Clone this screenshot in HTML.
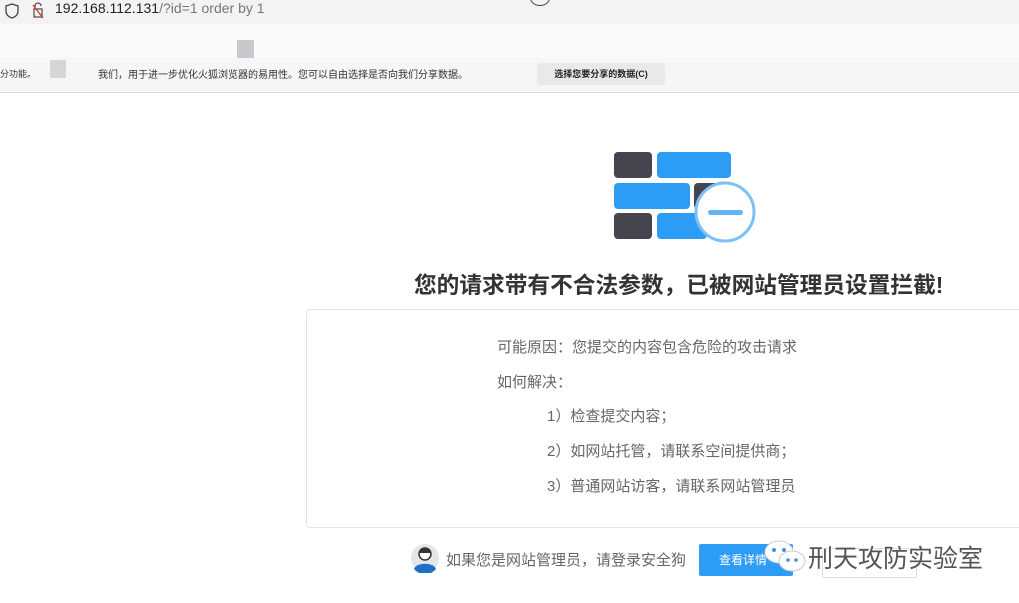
<!DOCTYPE html>
<html><head><meta charset="utf-8"><style>
body{margin:0;width:1019px;height:603px;background:#fff;position:relative;overflow:hidden;font-family:"Liberation Sans","Noto Sans CJK SC",sans-serif}
.a{position:absolute;white-space:nowrap}
.t{font-size:15px;color:#666}
</style></head><body>
<div class="a" style="left:0;top:0;width:1019px;height:24px;background:#f3f3f5"></div>
<div class="a" style="left:0;top:24px;width:1019px;height:34px;background:#fafafa"></div>
<div class="a" style="left:0;top:58px;width:1019px;height:34px;background:#f6f6f7;border-bottom:1px solid #ddd"></div>
<svg class="a" style="left:5px;top:2px" width="40" height="18"><path d="M7 2 L13 4 V9 C13 13 10 15 7 16 C4 15 1 13 1 9 V4Z" fill="none" stroke="#444" stroke-width="1.3"/><rect x="29" y="7" width="8" height="8" fill="none" stroke="#555" stroke-width="1.3"/><path d="M30 7 V4 a3 3 0 0 1 6 0" fill="none" stroke="#555" stroke-width="1.3"/><path d="M28 3 L38 16" stroke="#d33" stroke-width="1.4"/></svg>
<div class="a" style="left:55px;top:0px;font-size:14px;color:#222">192.168.112.131<span style="color:#777">/?id=1 order by 1</span></div>
<div class="a" style="left:530px;top:-10px;width:18px;height:14px;border:1.5px solid #444;border-radius:50%"></div>
<div class="a" style="left:237px;top:40px;width:17px;height:18px;background:#c8c8cc"></div>
<div class="a" style="left:50px;top:60px;width:16px;height:18px;background:#d6d6d8"></div>
<div class="a" style="left:0;top:67px;font-size:9px;color:#333">分功能。</div>
<div class="a" style="left:98px;top:66px;font-size:10px;color:#333">我们，用于进一步优化火狐浏览器的易用性。您可以自由选择是否向我们分享数据。</div>
<div class="a" style="left:537px;top:63px;width:128px;height:22px;background:#e9e9ec;border-radius:3px;font-size:9px;color:#222;line-height:22px;text-align:center;font-weight:bold">选择您要分享的数据(C)</div>
<svg class="a" style="left:600px;top:140px" width="170" height="110">
<rect x="14" y="12" width="38" height="26" rx="4" fill="#454550"/>
<rect x="57" y="12" width="74" height="26" rx="4" fill="#2d9cf4"/>
<rect x="14" y="43" width="76" height="26" rx="4" fill="#2d9cf4"/>
<rect x="94" y="43" width="38" height="26" rx="4" fill="#454550"/>
<rect x="14" y="73" width="38" height="26" rx="4" fill="#454550"/>
<rect x="57" y="73" width="50" height="26" rx="4" fill="#2d9cf4"/>
<circle cx="125" cy="72" r="29" fill="#fff" stroke="#7cc0f6" stroke-width="3"/>
<rect x="108" y="70" width="35" height="5" rx="2.5" fill="#63b3f5"/>
</svg>
<div class="a" style="left:414px;top:267px;font-size:22.7px;font-weight:bold;color:#333">您的请求带有不合法参数，已被网站管理员设置拦截!</div>
<div class="a" style="left:306px;top:309px;width:730px;height:217px;border:1px solid #e3e3e3;border-radius:4px"></div>
<div class="a t" style="left:497px;top:336px">可能原因：您提交的内容包含危险的攻击请求</div>
<div class="a t" style="left:497px;top:371px">如何解决：</div>
<div class="a t" style="left:547px;top:405px">1）检查提交内容；</div>
<div class="a t" style="left:547px;top:440px">2）如网站托管，请联系空间提供商；</div>
<div class="a t" style="left:547px;top:475px">3）普通网站访客，请联系网站管理员</div>
<svg class="a" style="left:410px;top:543px" width="30" height="30"><circle cx="15" cy="15" r="14" fill="#e6e6ea"/><path d="M4 26 C6 19 24 19 26 26 A14 14 0 0 1 4 26Z" fill="#1f6fc4"/><circle cx="15" cy="11" r="6" fill="#fff" stroke="#333" stroke-width="1.5"/><path d="M9 10 C9 4 21 4 21 10Z" fill="#333"/></svg>
<div class="a" style="left:446px;top:549px;font-size:15px;color:#666">如果您是网站管理员，请登录安全狗</div>
<div class="a" style="left:699px;top:544px;width:94px;height:32px;background:#2d9cf4;border-radius:2px;color:#fff;font-size:12px;line-height:32px;padding-left:20px;box-sizing:border-box">查看详情</div>
<div class="a" style="left:822px;top:548px;width:93px;height:28px;border:1px solid #ddd;border-radius:2px"></div>
<svg class="a" style="left:762px;top:538px" width="50" height="40"><ellipse cx="17" cy="14" rx="14" ry="11" fill="#fff" stroke="#ccc"/><ellipse cx="30" cy="23" rx="13" ry="10" fill="#fff" stroke="#ccc"/><circle cx="12" cy="12" r="2" fill="#4a90d9"/><circle cx="22" cy="12" r="2" fill="#4a90d9"/><circle cx="26" cy="22" r="1.8" fill="#4a90d9"/><circle cx="34" cy="22" r="1.8" fill="#4a90d9"/></svg>
<div class="a" style="left:808px;top:539px;font-size:25px;color:#555;text-shadow:0 0 2px #fff">刑天攻防实验室</div>
</body></html>
